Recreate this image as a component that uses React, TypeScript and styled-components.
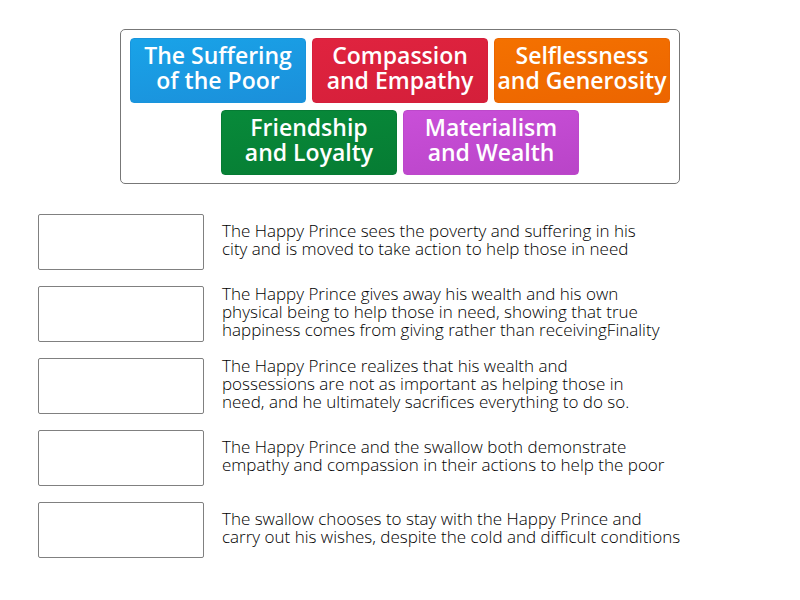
import React from "react";
import styled, { createGlobalStyle } from "styled-components";

const GlobalStyle = createGlobalStyle`
  *, *::before, *::after { box-sizing: border-box; }
  body { margin: 0; background: #fff; font-family: "Open Sans", sans-serif; color: #000; }
`;

const Page = styled.main`
  display: flex;
  flex-direction: column;
  gap: 29px;
  padding: 29px 38px;
`;

const Tray = styled.section`
  display: flex;
  flex-wrap: wrap;
  justify-content: center;
  gap: 7px 6px;
  width: 100%;
  max-width: 560px;
  margin: 0 auto;
  padding: 8px 6px;
  border: 1px solid #777;
  border-radius: 5px;
`;

const Tile = styled.button<{ $top: string; $bottom: string; $edge: string }>`
  display: flex;
  flex: 0 0 176px;
  justify-content: center;
  min-height: 65px;
  padding: 4px 0 9px;
  border: 1px solid ${(p) => p.$edge};
  border-radius: 4px;
  background: linear-gradient(170deg, ${(p) => p.$top}, ${(p) => p.$bottom});
  color: #fff;
  font: 600 23px/25px "Open Sans", sans-serif;
  text-align: center;
  white-space: pre;
  cursor: grab;
`;

const Questions = styled.ol`
  display: flex;
  flex-direction: column;
  gap: 14px;
  margin: 0;
  padding: 0;
  list-style: none;
`;

const Question = styled.li`
  display: flex;
  align-items: center;
  gap: 18px;
  min-height: 58px;
`;

const DropSlot = styled.button`
  flex: 0 0 166px;
  height: 56px;
  padding: 0;
  border: 1px solid #808080;
  border-radius: 2px;
  background: #fff;
`;

const Definition = styled.p`
  margin: 0;
  padding-bottom: 4px;
  font-size: 17px;
  font-weight: 300;
  line-height: 18px;
  white-space: pre-line;
`;

const tiles = [
  { label: "The Suffering\nof the Poor", top: "#19a3e8", bottom: "#1b8fda", edge: "#1994dc" },
  { label: "Compassion\nand Empathy", top: "#e0233f", bottom: "#d41f3a", edge: "#d51f3b" },
  { label: "Selflessness\nand Generosity", top: "#f47100", bottom: "#ec6500", edge: "#ea6600" },
  { label: "Friendship\nand Loyalty", top: "#088a3a", bottom: "#067c33", edge: "#067b34" },
  { label: "Materialism\nand Wealth", top: "#c94fd8", bottom: "#b944c8", edge: "#bd48cb" },
];

const definitions = [
  "The Happy Prince sees the poverty and suffering in his\ncity and is moved to take action to help those in need",
  "The Happy Prince gives away his wealth and his own\nphysical being to help those in need, showing that true\nhappiness comes from giving rather than receivingFinality",
  "The Happy Prince realizes that his wealth and\npossessions are not as important as helping those in\nneed, and he ultimately sacrifices everything to do so.",
  "The Happy Prince and the swallow both demonstrate\nempathy and compassion in their actions to help the poor",
  "The swallow chooses to stay with the Happy Prince and\ncarry out his wishes, despite the cold and difficult conditions",
];

export default function App() {
  return (
    <>
      <GlobalStyle />
      <Page>
        <Tray aria-label="Themes">
          {tiles.map((t) => (
            <Tile key={t.label} type="button" $top={t.top} $bottom={t.bottom} $edge={t.edge}>
              {t.label}
            </Tile>
          ))}
        </Tray>
        <Questions>
          {definitions.map((text, i) => (
            <Question key={text}>
              <DropSlot type="button" aria-labelledby={`definition-${i}`} />
              <Definition id={`definition-${i}`}>{text}</Definition>
            </Question>
          ))}
        </Questions>
      </Page>
    </>
  );
}
